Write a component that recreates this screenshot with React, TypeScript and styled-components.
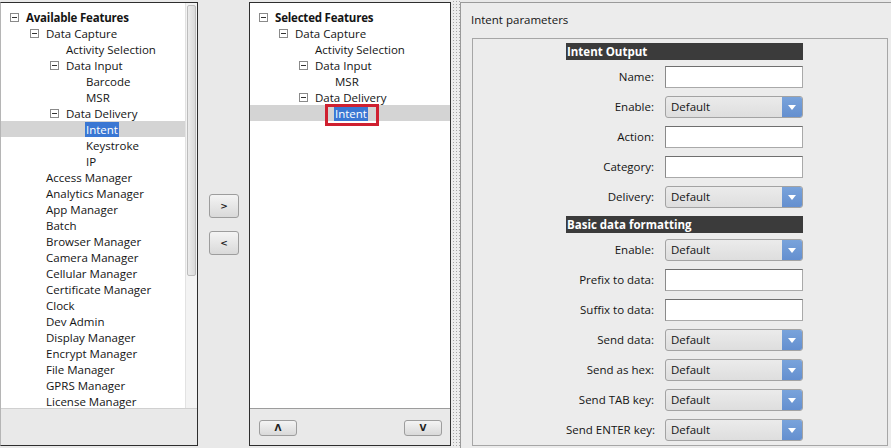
import styled, { createGlobalStyle } from "styled-components";

const GlobalStyle = createGlobalStyle`
  html, body {
    margin: 0;
    padding: 0;
    background: #f0f0f0;
  }
  * {
    box-sizing: border-box;
  }
`;

const Screen = styled.div`
  width: 891px;
  height: 448px;
  display: flex;
  padding: 2px 0 2px 0;
  background: #e9e9e9;
  font-family: "Open Sans", "Noto Sans", sans-serif;
  font-size: 11.5px;
  color: #141414;
  overflow: hidden;
`;

const TreePanel = styled.div<{ $width: number }>`
  width: ${(p) => p.$width}px;
  flex: none;
  display: flex;
  flex-direction: column;
  border: 1px solid #2e2e2e;
  background: #e9e9e9;
`;

const TreeBody = styled.div`
  flex: 1;
  display: flex;
  background: #fff;
  min-height: 0;
`;

const TreeList = styled.div`
  flex: 1;
  padding-top: 6px;
`;

const ScrollTrack = styled.div`
  width: 12px;
  flex: none;
  background: #f3f3f3;
  border-left: 1px solid #e2e2e2;
  padding: 2px 1px;
`;

const ScrollThumb = styled.div`
  height: 271px;
  border: 1px solid #bdbdbd;
  border-radius: 2px;
  background: linear-gradient(to right, #ececec, #dadada);
`;

const TreeFooter = styled.div<{ $split?: boolean }>`
  height: 37px;
  flex: none;
  border-top: 1px solid ${(p) => (p.$split ? "#9c9c9c" : "#d0d0d0")};
  display: flex;
  justify-content: space-between;
  align-items: flex-start;
  padding: 11px 8px 0 9px;
`;

const Row = styled.div<{ $level: number; $active?: boolean }>`
  height: 16px;
  display: flex;
  align-items: center;
  padding-left: ${(p) => 9 + p.$level * 20}px;
  background: ${(p) => (p.$active ? "#d4d4d4" : "transparent")};
  white-space: nowrap;
  line-height: 16px;
`;

const Toggle = styled.span`
  width: 16px;
  flex: none;
  display: flex;
  align-items: center;
`;

const Label = styled.span<{ $bold?: boolean; $picked?: boolean; $marked?: boolean }>`
  position: relative;
  font-weight: ${(p) => (p.$bold ? 700 : 400)};
  letter-spacing: ${(p) => (p.$bold ? "-0.2px" : "0")};
  background: ${(p) => (p.$picked ? "#3a77d3" : "transparent")};
  color: ${(p) => (p.$picked ? "#fff" : "inherit")};
  padding: 0 ${(p) => (p.$picked ? "1px" : "0")};
  margin-left: ${(p) => (p.$picked ? "-1px" : "0")};
  line-height: 15px;

  ${(p) =>
    p.$marked &&
    `
    &::after {
      content: "";
      position: absolute;
      left: -9px;
      right: -11px;
      top: -2px;
      bottom: -5px;
      border: 3px solid #cf2030;
    }
  `}
`;

const ArrowColumn = styled.div`
  width: 51px;
  flex: none;
  display: flex;
  flex-direction: column;
  align-items: center;
  gap: 13px;
  padding-top: 192px;
  padding-left: 1px;
`;

const PushButton = styled.button<{ $w: number; $h: number }>`
  width: ${(p) => p.$w}px;
  height: ${(p) => p.$h}px;
  padding: 0;
  border: 1px solid #9d9d9d;
  border-radius: 3px;
  background: linear-gradient(#f4f4f4, #d9d9d9);
  font-family: "DejaVu Sans", sans-serif;
  font-size: 9px;
  font-weight: 700;
  color: #222;
  display: flex;
  align-items: center;
  justify-content: center;
`;

const Splitter = styled.div`
  width: 9px;
  flex: none;
  margin-top: -2px;
  margin-bottom: -2px;
  background-color: #ececec;
  background-image: radial-gradient(#a6a6a6 0.7px, transparent 0.9px);
  background-size: 3px 3px;
  background-position: 1px 0;
`;

const ParamPanel = styled.div`
  flex: 1;
  display: flex;
  flex-direction: column;
  background: #ececec;
  border-left: 1px solid #9a9a9a;
  border-top: 1px solid #9a9a9a;
  margin-bottom: -2px;
`;

const PanelTitle = styled.div`
  padding: 9px 0 0 10px;
  height: 35px;
  flex: none;
  line-height: 16px;
`;

const GroupBox = styled.div`
  flex: 1;
  margin: 0 3px 2px 11px;
  border: 1px solid #a6a6a6;
  padding: 4px 0 0 93px;
`;

const Form = styled.div`
  display: grid;
  grid-template-columns: 88px 138px;
  column-gap: 11px;
  row-gap: 7px;
`;

const SectionHeader = styled.div`
  grid-column: 1 / -1;
  height: 17px;
  margin-bottom: -1px;
  background: #3b3b3b;
  color: #fff;
  font-weight: 700;
  line-height: 17px;
  padding-left: 1px;
`;

const FieldLabel = styled.label`
  height: 23px;
  text-align: right;
  line-height: 22px;
  white-space: nowrap;
`;

const TextBox = styled.div`
  height: 22px;
  background: #fff;
  border: 1px solid #7f7f7f;
  border-color: #6f6f6f #a9a9a9 #a9a9a9 #8a8a8a;
`;

const Select = styled.div`
  height: 22px;
  display: flex;
  border: 1px solid #a3a3a3;
  border-radius: 3px;
  overflow: hidden;
  background: linear-gradient(#ebebeb, #dedede);
`;

const SelectValue = styled.span`
  flex: 1;
  padding-left: 5px;
  line-height: 20px;
`;

const SelectArrow = styled.span`
  width: 20px;
  flex: none;
  background: linear-gradient(#79a3db, #648fcf);
  display: flex;
  align-items: center;
  justify-content: center;
`;

type Node = {
  label: string;
  level: number;
  open?: boolean;
  bold?: boolean;
  active?: boolean;
  marked?: boolean;
};

const available: Node[] = [
  { label: "Available Features", level: 0, open: true, bold: true },
  { label: "Data Capture", level: 1, open: true },
  { label: "Activity Selection", level: 2 },
  { label: "Data Input", level: 2, open: true },
  { label: "Barcode", level: 3 },
  { label: "MSR", level: 3 },
  { label: "Data Delivery", level: 2, open: true },
  { label: "Intent", level: 3, active: true },
  { label: "Keystroke", level: 3 },
  { label: "IP", level: 3 },
  ...[
    "Access Manager",
    "Analytics Manager",
    "App Manager",
    "Batch",
    "Browser Manager",
    "Camera Manager",
    "Cellular Manager",
    "Certificate Manager",
    "Clock",
    "Dev Admin",
    "Display Manager",
    "Encrypt Manager",
    "File Manager",
    "GPRS Manager",
    "License Manager",
  ].map((label) => ({ label, level: 1 })),
];

const selected: Node[] = [
  { label: "Selected Features", level: 0, open: true, bold: true },
  { label: "Data Capture", level: 1, open: true },
  { label: "Activity Selection", level: 2 },
  { label: "Data Input", level: 2, open: true },
  { label: "MSR", level: 3 },
  { label: "Data Delivery", level: 2, open: true },
  { label: "Intent", level: 3, active: true, marked: true },
];

type Field = { kind: "header" | "text" | "select"; label: string };

const fields: Field[] = [
  { kind: "header", label: "Intent Output" },
  { kind: "text", label: "Name:" },
  { kind: "select", label: "Enable:" },
  { kind: "text", label: "Action:" },
  { kind: "text", label: "Category:" },
  { kind: "select", label: "Delivery:" },
  { kind: "header", label: "Basic data formatting" },
  { kind: "select", label: "Enable:" },
  { kind: "text", label: "Prefix to data:" },
  { kind: "text", label: "Suffix to data:" },
  { kind: "select", label: "Send data:" },
  { kind: "select", label: "Send as hex:" },
  { kind: "select", label: "Send TAB key:" },
  { kind: "select", label: "Send ENTER key:" },
];

function MinusBox() {
  return (
    <svg width="9" height="9" viewBox="0 0 9 9">
      <rect x="0.5" y="0.5" width="8" height="8" fill="#fff" stroke="#8a8a8a" />
      <line x1="2" y1="4.5" x2="7" y2="4.5" stroke="#333" />
    </svg>
  );
}

function Tree({ nodes }: { nodes: Node[] }) {
  return (
    <TreeList>
      {nodes.map((n, i) => (
        <Row key={i} $level={n.level} $active={n.active}>
          <Toggle>{n.open && <MinusBox />}</Toggle>
          <Label $bold={n.bold} $picked={n.active} $marked={n.marked}>
            {n.label}
          </Label>
        </Row>
      ))}
    </TreeList>
  );
}

function FieldRow({ field }: { field: Field }) {
  return (
    <>
      <FieldLabel>{field.label}</FieldLabel>
      {field.kind === "text" ? (
        <TextBox />
      ) : (
        <Select>
          <SelectValue>Default</SelectValue>
          <SelectArrow>
            <svg width="8" height="5" viewBox="0 0 8 5">
              <path d="M0 0 H8 L4 5 Z" fill="#fff" />
            </svg>
          </SelectArrow>
        </Select>
      )}
    </>
  );
}

export default function App() {
  return (
    <>
      <GlobalStyle />
      <Screen>
        <TreePanel $width={198} style={{ borderLeftColor: "#b5b5b5" }}>
          <TreeBody>
            <Tree nodes={available} />
            <ScrollTrack>
              <ScrollThumb />
            </ScrollTrack>
          </TreeBody>
          <TreeFooter />
        </TreePanel>

        <ArrowColumn>
          <PushButton $w={30} $h={24}>&gt;</PushButton>
          <PushButton $w={30} $h={24}>&lt;</PushButton>
        </ArrowColumn>

        <TreePanel $width={202}>
          <TreeBody>
            <Tree nodes={selected} />
          </TreeBody>
          <TreeFooter $split>
            <PushButton $w={38} $h={16}>Λ</PushButton>
            <PushButton $w={38} $h={16}>V</PushButton>
          </TreeFooter>
        </TreePanel>

        <Splitter />

        <ParamPanel>
          <PanelTitle>Intent parameters</PanelTitle>
          <GroupBox>
            <Form>
              {fields.map((f, i) =>
                f.kind === "header" ? (
                  <SectionHeader key={i}>{f.label}</SectionHeader>
                ) : (
                  <FieldRow key={i} field={f} />
                )
              )}
            </Form>
          </GroupBox>
        </ParamPanel>
      </Screen>
    </>
  );
}
